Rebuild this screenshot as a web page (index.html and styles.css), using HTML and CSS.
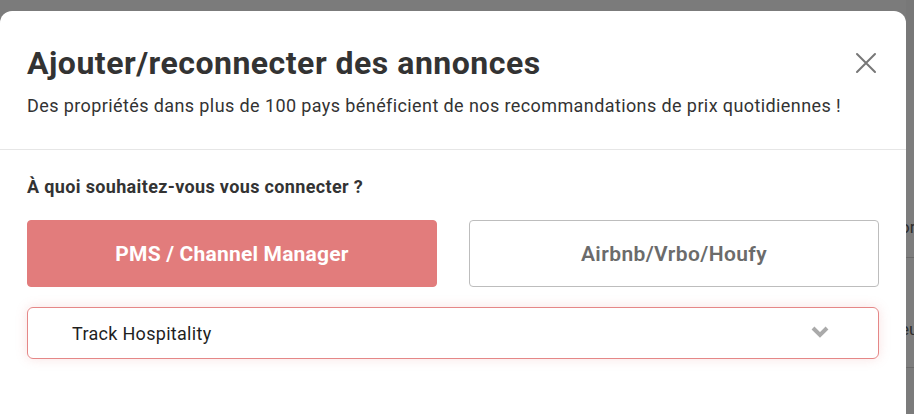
FILE: index.html
```html
<!DOCTYPE html>
<html lang="fr">
<head>
<meta charset="utf-8">
<title>Ajouter/reconnecter des annonces</title>
<link rel="stylesheet" href="styles.css">
</head>
<body>
<div class="screen">
  <div class="modal">
    <div class="modal-header">
      <div class="title-row">
        <h1 class="title">Ajouter/reconnecter des annonces</h1>
        <button class="close" aria-label="Fermer">
          <svg width="22" height="22" viewBox="0 0 22 22"><path d="M2 2 L20 20 M20 2 L2 20" stroke="#777" stroke-width="2" fill="none" stroke-linecap="round"/></svg>
        </button>
      </div>
      <p class="subtitle">Des propriétés dans plus de 100 pays bénéficient de nos recommandations de prix quotidiennes !</p>
    </div>
    <div class="modal-body">
      <div class="label">À quoi souhaitez-vous vous connecter ?</div>
      <div class="choices">
        <button class="choice active">PMS / Channel Manager</button>
        <button class="choice">Airbnb/Vrbo/Houfy</button>
      </div>
      <div class="select">
        <span class="select-value">Track Hospitality</span>
        <svg class="chevron" width="20" height="14" viewBox="0 0 20 14"><path d="M3 3 L10 10 L17 3" stroke="#aaa" stroke-width="4" fill="none" stroke-linejoin="miter"/></svg>
      </div>
      <div class="label next">Identifiant</div>
    </div>
  </div>
  <div class="backdrop-strip">
    <div class="strip-top"></div>
    <div class="strip-row first"><span>or</span></div>
    <div class="strip-row second"><span>eu</span></div>
  </div>
</div>
</body>
</html>
```

FILE: styles.css
```css
* { box-sizing: border-box; }
html, body {
  margin: 0;
  padding: 0;
  height: 100%;
  overflow: hidden;
}
body {
  background: #7b7b7b;
  font-family: Roboto, "Liberation Sans", sans-serif;
}
.screen {
  display: flex;
  height: 414px;
}
.modal {
  width: 906px;
  flex: none;
  margin-top: 11px;
  background: #fff;
  border-radius: 12px 12px 0 0;
  height: 420px;
}
.modal-header {
  padding: 32px 28px 0 27px;
  height: 139px;
  border-bottom: 1px solid #e6e6e6;
}
.title-row {
  display: flex;
  justify-content: space-between;
  align-items: center;
}
.title {
  margin: 0;
  font-size: 32px;
  line-height: 40px;
  font-weight: 700;
  color: #333;
  letter-spacing: 0.5px;
}
.close {
  border: 0;
  background: none;
  padding: 0;
  width: 22px;
  height: 22px;
  display: flex;
  margin-right: 1px;
  margin-top: -1px;
}
.subtitle {
  margin: 11px 0 0;
  font-size: 18px;
  line-height: 24px;
  color: #333;
  letter-spacing: 0.4px;
}
.modal-body {
  padding: 26px 26px 0 27px;
}
.label {
  font-size: 18px;
  line-height: 22px;
  font-weight: 700;
  color: #333;
  letter-spacing: 0.35px;
}
.choices {
  display: grid;
  grid-template-columns: 410px 410px;
  column-gap: 32px;
  margin-top: 22px;
}
.choice {
  height: 67px;
  border-radius: 4px;
  border: 1px solid #bdbdbd;
  background: #fff;
  font-family: inherit;
  font-size: 21px;
  font-weight: 600;
  color: #6b6b6b;
  letter-spacing: 0.4px;
}
.choice.active {
  background: #e27c7c;
  border-color: #e27c7c;
  color: #fff;
  font-weight: 700;
  letter-spacing: 0.2px;
}
.select {
  margin-top: 20px;
  width: 852px;
  height: 52px;
  border: 1px solid #e58787;
  border-radius: 6px;
  box-shadow: 0 0 12px rgba(226, 124, 124, 0.22);
  display: flex;
  align-items: center;
  justify-content: space-between;
  padding: 0 48px 0 44px;
}
.select-value {
  font-size: 18px;
  color: #1f1f1f;
  letter-spacing: 0.3px;
}
.chevron { display: block; margin-top: -2px; }
.label.next {
  margin-top: 54px;
}
.backdrop-strip {
  flex: 1;
  overflow: hidden;
  color: #2e2e2e;
  font-size: 17px;
  white-space: nowrap;
}
.strip-top {
  height: 90px;
  background: #787878;
}
.strip-row {
  border-bottom: 1px solid #6a6a6a;
  background: #7d7d7d;
  display: flex;
  align-items: flex-end;
}
.strip-row span { margin-left: -6px; }
.strip-row.first { height: 168px; padding-bottom: 20px; }
.strip-row.second { height: 110px; padding-bottom: 28px; }
```
